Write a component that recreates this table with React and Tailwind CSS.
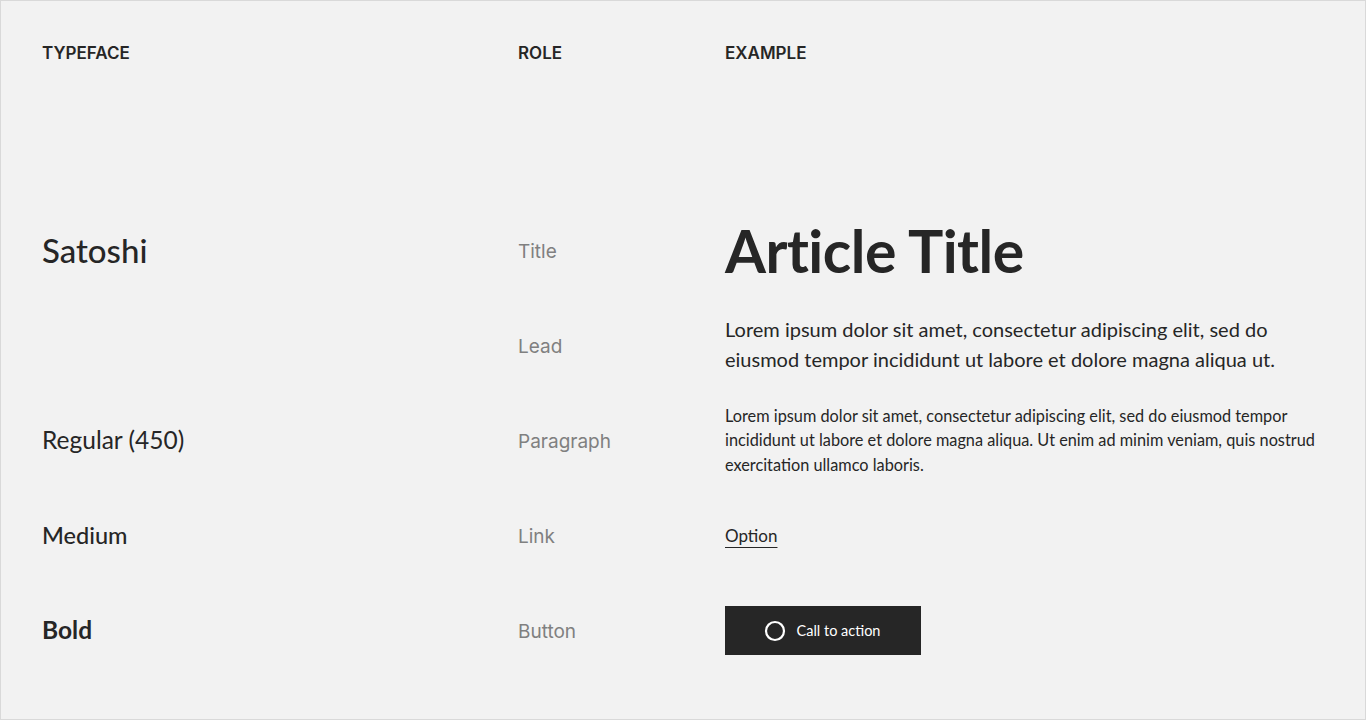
import React from "react";

const sato = "font-['Lato','Inter',sans-serif]";
const inter = "font-['Inter',sans-serif]";

const rows = [
  { face: "Satoshi", faceClass: "text-[33px] font-medium", role: "Title" },
  { face: "", faceClass: "", role: "Lead" },
  { face: "Regular (450)", faceClass: "text-[24.5px] font-normal", role: "Paragraph" },
  { face: "Medium", faceClass: "text-[23.5px] font-medium", role: "Link" },
  { face: "Bold", faceClass: "text-[24.5px] font-bold", role: "Button" },
];

function Example({ role }) {
  if (role === "Title") {
    return (
      <h1 className={`${sato} text-[59px] font-bold leading-none tracking-[-0.5px] text-[#262626]`}>
        Article Title
      </h1>
    );
  }
  if (role === "Lead") {
    return (
      <p className={`${sato} text-[20px] leading-[30px] text-[#262626] -mt-[3px]`}>
        Lorem ipsum dolor sit amet, consectetur adipiscing elit, sed do
        <br />
        eiusmod tempor incididunt ut labore et dolore magna aliqua ut.
      </p>
    );
  }
  if (role === "Paragraph") {
    return (
      <p className={`${sato} text-[16.3px] leading-[24.5px] text-[#262626]`}>
        Lorem ipsum dolor sit amet, consectetur adipiscing elit, sed do eiusmod tempor
        <br />
        incididunt ut labore et dolore magna aliqua. Ut enim ad minim veniam, quis nostrud
        <br />
        exercitation ullamco laboris.
      </p>
    );
  }
  if (role === "Link") {
    return (
      <a href="#" className={`${sato} text-[17px] text-[#262626] underline underline-offset-[5px] decoration-1`}>
        Option
      </a>
    );
  }
  return (
    <button className="flex items-center justify-center gap-[11px] w-[196px] h-[49px] bg-[#262626] text-white pr-[2px]">
      <svg width="22" height="22" viewBox="0 0 22 22" fill="none">
        <circle cx="11" cy="11" r="9" stroke="white" strokeWidth="2.2" />
      </svg>
      <span className={`${sato} text-[14.5px]`}>Call to action</span>
    </button>
  );
}

export default function App() {
  return (
    <div className="w-full h-[720px] border border-[#d9d9d9] bg-[#f2f2f2] pl-[41px] pt-[40px] overflow-hidden">
      <div className={`grid grid-cols-[476px_207px_1fr] h-[24px] items-center ${inter} text-[17px] font-semibold text-[#262626]`}>
        <div>TYPEFACE</div>
        <div>ROLE</div>
        <div>EXAMPLE</div>
      </div>
      <div className="grid grid-cols-[476px_207px_1fr] auto-rows-[95px] items-center mt-[138px]">
        {rows.map((r) => (
          <React.Fragment key={r.role}>
            <div className={`${sato} ${r.faceClass} text-[#262626]`}>{r.face}</div>
            <div className={`${inter} text-[19px] text-[#808080] pt-[3px]`}>{r.role}</div>
            <div>
              <Example role={r.role} />
            </div>
          </React.Fragment>
        ))}
      </div>
    </div>
  );
}
